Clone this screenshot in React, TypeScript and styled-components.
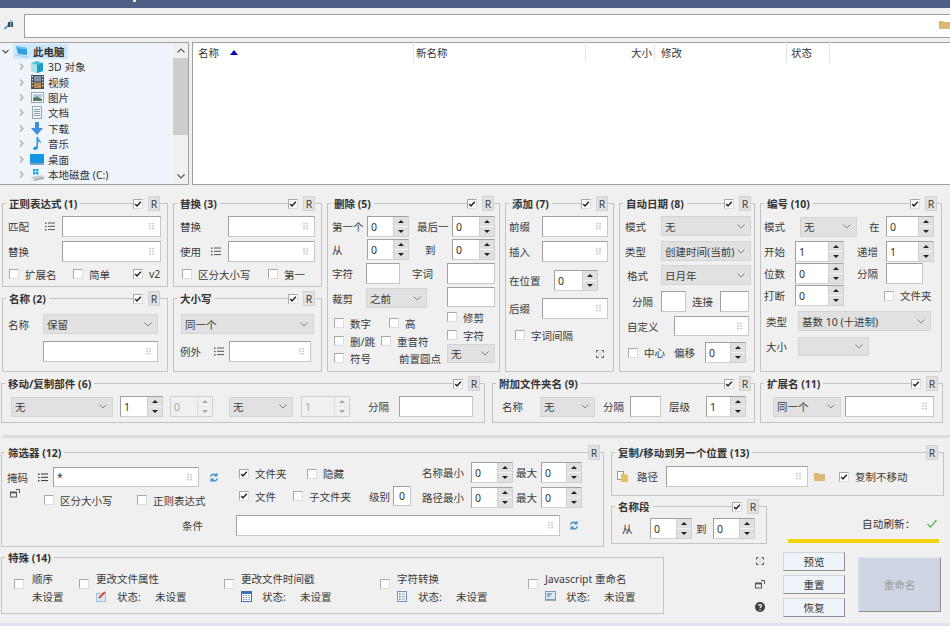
import React from 'react'
import styled, { createGlobalStyle, css } from 'styled-components'

const GlobalStyle = createGlobalStyle`
  html, body { margin: 0; padding: 0; background: #f0f0f0; }
  body { font-family: "Noto Sans", "Noto Sans CJK SC", sans-serif; font-size: 10.5px; color: #333; }
`

type Offset = { $ml?: number; $w?: number }

const offset = css<Offset>`
  margin-left: ${p => p.$ml ?? 0}px;
  ${p => (p.$w !== undefined ? `width: ${p.$w}px;` : '')}
  flex: none;
`

const Page = styled.div`
  width: 950px;
  height: 626px;
  overflow: hidden;
  position: relative;
  display: flex;
  flex-direction: column;
  background: #f0f0f0;
`

const TitleBar = styled.div`
  height: 8px;
  background: #4e5f85;
  flex: none;
  padding-left: 133px;
  box-sizing: border-box;
`

const TitleSpeck = styled.div`
  width: 3px;
  height: 2px;
  background: #e8ecf4;
`

const Toolbar = styled.div`
  height: 34px;
  flex: none;
  display: flex;
  align-items: flex-start;
  padding: 6px 0 0 4px;
  box-sizing: border-box;
`

const PinSlot = styled.span`
  margin-top: 6px;
  display: flex;
`

const PathBox = styled.div`
  margin-left: 10px;
  flex: 1;
  height: 24px;
  background: #fff;
  border: 1px solid #a0a0a0;
  border-right: none;
  box-sizing: border-box;
  display: flex;
  justify-content: flex-end;
  align-items: center;
  overflow: hidden;
  padding-bottom: 4px;
`

const Browser = styled.div`
  height: 143px;
  flex: none;
  display: flex;
  gap: 3px;
`

const Tree = styled.div`
  width: 189px;
  background: #eff4fa;
  border: 1px solid #a0a0a0;
  border-left: none;
  box-sizing: border-box;
  display: flex;
`

const TreeList = styled.div`
  flex: 1;
`

const TreeRow = styled.div<{ $selected?: boolean }>`
  height: ${p => (p.$selected ? 16 : 15.4)}px;
  display: flex;
  align-items: center;
  padding-left: ${p => (p.$selected ? 2 : 18)}px;
`

const TreeIcon = styled.span`
  width: 14px;
  height: 14px;
  margin: 0 4px 0 5px;
  flex: none;
  display: flex;
  align-items: center;
  justify-content: center;
`

const Selected = styled.div`
  display: flex;
  align-items: center;
  background: #cce8ff;
  height: 15px;
  margin-left: 4px;
  padding: 0 3px 0 2px;
  font-weight: 700;
  gap: 4px;
`

const ScrollTrack = styled.div`
  width: 15px;
  background: #f0f0f0;
  display: flex;
  flex-direction: column;
`

const ScrollEnd = styled.div`
  height: 15px;
  flex: none;
  display: flex;
  align-items: center;
  justify-content: center;
`

const ScrollRoom = styled.div`
  flex: 1;
`

const ScrollThumb = styled.div`
  height: 77px;
  background: #cdcdcd;
`

const ListView = styled.div`
  flex: 1;
  background: #fff;
  border: 1px solid #a0a0a0;
  border-right: none;
  box-sizing: border-box;
`

const ListHead = styled.div`
  display: flex;
  height: 19px;
`

const ListCol = styled.div<{ $w: number; $pl?: number; $pr?: number; $right?: boolean }>`
  width: ${p => p.$w}px;
  box-sizing: border-box;
  height: 20px;
  padding: 0 ${p => p.$pr ?? 5}px 0 ${p => p.$pl ?? 5}px;
  display: flex;
  align-items: center;
  border-right: 1px solid #e5e5e5;
  justify-content: ${p => (p.$right ? 'flex-end' : 'flex-start')};
  margin-top: -1px;
`

const SortArrow = styled.span`
  width: 0;
  height: 0;
  margin-left: 11px;
  border-left: 4px solid transparent;
  border-right: 4px solid transparent;
  border-bottom: 5px solid #0000c8;
`

const Panels = styled.div`
  margin: 18px 0 0 2px;
  display: grid;
  grid-template-columns: 166px 149px 173px 109px 136px 182px;
  grid-template-rows: 84px 74px;
  column-gap: 5px;
  row-gap: 11px;
  flex: none;
`

const Group = styled.div<{ $w?: number; $h?: number; $rows?: boolean; $mt?: number; $ml?: number }>`
  border: 1px solid #c4c4c4;
  box-sizing: border-box;
  display: flex;
  flex-direction: column;
  ${p => (p.$w ? `width: ${p.$w}px; flex: none;` : '')}
  ${p => (p.$h ? `height: ${p.$h}px;` : '')}
  ${p => (p.$rows ? 'grid-row: span 2;' : '')}
  ${p => (p.$mt ? `margin-top: ${p.$mt}px;` : '')}
  ${p => (p.$ml ? `margin-left: ${p.$ml}px;` : '')}
`

const Head = styled.div`
  display: flex;
  justify-content: space-between;
  align-items: center;
  height: 15px;
  margin-top: -8px;
  flex: none;
`

const Title = styled.span`
  font-weight: 700;
  background: #f0f0f0;
  padding: 0 3px;
  margin-left: 3px;
  line-height: 14px;
`

const Tools = styled.div<{ $rm: number }>`
  display: flex;
  align-items: center;
  background: #f0f0f0;
  gap: 5px;
  margin-right: ${p => p.$rm}px;
`

const ResetBtn = styled.div`
  width: 12px;
  height: 15px;
  background: #e1e1e1;
  border: 1px solid #d2d2d2;
  box-sizing: border-box;
  display: flex;
  align-items: center;
  justify-content: center;
  font-size: 10.5px;
  color: #444;
`

const Row = styled.div<{ $mt?: number; $h?: number }>`
  display: flex;
  align-items: center;
  flex: none;
  height: ${p => p.$h ?? 21}px;
  margin-top: ${p => p.$mt ?? 0}px;
`

const Label = styled.span<Offset>`
  ${offset}
  white-space: nowrap;
  color: #3a3a3a;
`

const IconSlot = styled.span<Offset>`
  ${offset}
  display: flex;
`

const BoxEl = styled.span<{ $ml?: number }>`
  width: 10px;
  height: 10px;
  flex: none;
  box-sizing: border-box;
  margin-left: ${p => p.$ml ?? 0}px;
  background: #fff;
  border: 1px solid #a8a8a8;
  border-right-color: #dcdcdc;
  border-bottom-color: #dcdcdc;
  display: flex;
  align-items: center;
  justify-content: center;
`

const CheckWrap = styled.span<Offset>`
  ${offset}
  display: flex;
  align-items: center;
  gap: 6px;
  white-space: nowrap;
  color: #3a3a3a;
`

const Box = ({ on, $ml }: { on?: boolean; $ml?: number }) => (
  <BoxEl $ml={$ml}>
    {on && (
      <svg width="8" height="8" viewBox="0 0 8 8">
        <path d="M1.2 4 L3 6 L6.8 1.8" fill="none" stroke="#222" strokeWidth="1.5" />
      </svg>
    )}
  </BoxEl>
)

const Check = ({ label, on, $ml, $w }: { label: string; on?: boolean } & Offset) => (
  <CheckWrap $ml={$ml} $w={$w}>
    <Box on={on} />
    {label}
  </CheckWrap>
)

const FieldEl = styled.div<Offset & { $h?: number; $center?: boolean }>`
  ${offset}
  height: ${p => p.$h ?? 21}px;
  background: #fff;
  border: 1px solid #a0a0a0;
  border-right-color: #c8c8c8;
  border-bottom-color: #c8c8c8;
  box-sizing: border-box;
  display: flex;
  align-items: center;
  justify-content: ${p => (p.$center ? 'center' : 'space-between')};
  padding: 0 3px;
`

const GripGlyph = styled.svg`
  width: 5px;
  height: 7px;
  margin-left: auto;
  margin-right: 3px;
`

const Grip = () => (
  <GripGlyph viewBox="0 0 5 7">
    {[0.5, 3.5].map(x =>
      [0, 2.5, 5].map(y => <rect key={`${x}${y}`} x={x} y={y} width="1" height="1.4" fill="#9a9a9a" />)
    )}
  </GripGlyph>
)

const Field = ({ grip, value, $ml, $w, $h, $center }: { grip?: boolean; value?: string; $h?: number; $center?: boolean } & Offset) => (
  <FieldEl $ml={$ml} $w={$w} $h={$h} $center={$center}>
    {value}
    {grip && <Grip />}
  </FieldEl>
)

const SelectEl = styled.div<Offset & { $h?: number }>`
  ${offset}
  height: ${p => p.$h ?? 20}px;
  background: #e1e1e1;
  border: 1px solid #d4d4d4;
  box-sizing: border-box;
  display: flex;
  align-items: center;
  justify-content: space-between;
  padding: 0 5px 0 3px;
  white-space: nowrap;
  overflow: hidden;
  color: #3a3a3a;
`

const Select = ({ value, $ml, $w, $h }: { value?: string; $h?: number } & Offset) => (
  <SelectEl $ml={$ml} $w={$w} $h={$h}>
    <span>{value}</span>
    <svg width="8" height="5" viewBox="0 0 8 5" style={{ flex: 'none' }}>
      <path d="M0.5 0.5 L4 4 L7.5 0.5" fill="none" stroke="#777" strokeWidth="0.9" />
    </svg>
  </SelectEl>
)

const SpinEl = styled.div<Offset & { $off?: boolean }>`
  ${offset}
  height: 21px;
  display: flex;
  box-sizing: border-box;
  border: 1px solid ${p => (p.$off ? '#d0d0d0' : '#a0a0a0')};
  border-right-color: #d0d0d0;
  border-bottom-color: #d0d0d0;
  background: ${p => (p.$off ? '#f0f0f0' : '#fff')};
  color: ${p => (p.$off ? '#a8a8a8' : '#333')};
`

const SpinVal = styled.span`
  flex: 1;
  padding-left: 3px;
  display: flex;
  align-items: center;
`

const SpinBtns = styled.span<{ $off?: boolean }>`
  width: 14px;
  flex: none;
  display: flex;
  flex-direction: column;
  background: ${p => (p.$off ? '#f0f0f0' : '#e0e0e0')};
  border-left: 1px solid ${p => (p.$off ? '#dcdcdc' : '#d0d0d0')};
`

const SpinBtn = styled.span<{ $down?: boolean; $off?: boolean }>`
  flex: 1;
  display: flex;
  align-items: center;
  justify-content: center;
  ${p => p.$down && `border-top: 1px solid ${p.$off ? '#e6e6e6' : '#f4f4f4'};`}
  &::after {
    content: '';
    border-left: 3px solid transparent;
    border-right: 3px solid transparent;
    ${p => {
      const c = p.$off ? '#a8a8a8' : '#222'
      return p.$down ? `border-top: 3px solid ${c};` : `border-bottom: 3px solid ${c};`
    }}
  }
`

const Spin = ({ value, off, $ml, $w }: { value: string; off?: boolean } & Offset) => (
  <SpinEl $ml={$ml} $w={$w} $off={off}>
    <SpinVal>{value}</SpinVal>
    <SpinBtns $off={off}>
      <SpinBtn $off={off} />
      <SpinBtn $down $off={off} />
    </SpinBtns>
  </SpinEl>
)

const ListGlyph = styled.svg<{ $ml?: number }>`
  width: 10px;
  height: 9px;
  flex: none;
  margin-left: ${p => p.$ml ?? 0}px;
`

const ListIcon = ({ $ml, dark }: { $ml?: number; dark?: boolean }) => (
  <ListGlyph $ml={$ml} viewBox="0 0 10 9">
    {[0.5, 3.8, 7.1].map(y => (
      <g key={y} fill={dark ? '#333' : '#555'}>
        <rect x="0" y={y} width="1.5" height="1.4" />
        <rect x="3" y={y} width="7" height="1" />
      </g>
    ))}
  </ListGlyph>
)

const Split = styled.div<{ $mt?: number; $h?: number }>`
  display: flex;
  ${p => (p.$mt ? `margin-top: ${p.$mt}px;` : '')}
  ${p => (p.$h ? `height: ${p.$h}px;` : '')}
`

const Stack = styled.div<{ $w?: number; $ml?: number }>`
  display: flex;
  flex-direction: column;
  flex: none;
  ${p => (p.$w ? `width: ${p.$w}px;` : '')}
  ${p => (p.$ml ? `margin-left: ${p.$ml}px;` : '')}
`

const ThirdRow = styled.div`
  margin: 11px 0 0 1px;
  display: flex;
  flex: none;
`

const Divider = styled.div`
  height: 3px;
  margin: 12px 0 14px 3px;
  background: #dcdcdc;
  flex: none;
`

const FilterRow = styled.div`
  display: flex;
  margin-left: 1px;
  flex: none;
  height: 95px;
`

const MaskOptions = styled.span`
  margin-left: 8px;
  align-self: flex-start;
  display: flex;
`

const Status = styled.div`
  margin-left: 21px;
  width: 151px;
  display: flex;
  flex-direction: column;
  flex: none;
`

const StatusLine = styled.div`
  display: flex;
  align-items: center;
  height: 14px;
  margin-top: 10px;
  padding-left: 74px;
`

const StatusText = styled.span`
  width: 65px;
  flex: none;
  letter-spacing: 0.2px;
`

const YellowBar = styled.div`
  height: 4px;
  margin-top: 9px;
  background: #f4d20e;
`

const BottomRow = styled.div`
  display: flex;
  margin: 5px 0 0 1px;
  flex: none;
  align-items: flex-start;
`

const SpecialRow = styled.div`
  display: flex;
  margin: 7px 0 0 12px;
`

const SpecialItem = styled.div<{ $w?: number }>`
  display: flex;
  flex: none;
  gap: 7px;
  ${p => (p.$w ? `width: ${p.$w}px;` : '')}
`

const BoxSlot = styled.span`
  margin-top: 7px;
  display: flex;
`

const SpecialLine = styled.div<{ $mt?: number }>`
  height: 12px;
  display: flex;
  align-items: center;
  white-space: nowrap;
  margin-top: ${p => p.$mt ?? 0}px;
  color: #3a3a3a;
`

const StateIcon = styled.span`
  width: 21px;
  flex: none;
  display: flex;
  align-items: center;
`

const StateKey = styled.span`
  width: 38px;
  flex: none;
`

const SideIcons = styled.div`
  margin: 4px 0 0 91px;
  width: 10px;
  flex: none;
  display: flex;
  flex-direction: column;
  gap: 13px;
`

const SideIcon = styled.span`
  width: 10px;
  height: 10px;
  display: flex;
  align-items: center;
  justify-content: center;
`

const Buttons = styled.div`
  margin-left: 18px;
  width: 62px;
  flex: none;
  display: flex;
  flex-direction: column;
  gap: 4.5px;
`

const SmallBtn = styled.div`
  height: 18.5px;
  background: #eff3fa;
  border: 1px solid #d6d6d6;
  border-right-color: #8f8f8f;
  border-bottom-color: #8f8f8f;
  box-sizing: border-box;
  display: flex;
  align-items: center;
  justify-content: center;
  color: #333;
`

const RenameBtn = styled.div`
  margin: 5px 0 0 13px;
  width: 83px;
  height: 55px;
  flex: none;
  background: #cfd6e3;
  border: 1px solid #dfe3ea;
  border-right-color: #8f8f8f;
  border-bottom-color: #8f8f8f;
  box-sizing: border-box;
  display: flex;
  align-items: center;
  justify-content: center;
  color: #9a9a9a;
`

const FootBar = styled.div`
  position: absolute;
  left: 0;
  right: 0;
  bottom: 0;
  height: 3px;
  background: #dfe3ef;
`

const GroupHead = ({ title, rm, on = true }: { title?: string; rm: number; on?: boolean }) => (
  <Head>
    <Title>{title}</Title>
    <Tools $rm={rm}>
      {on && <Box on />}
      <ResetBtn>R</ResetBtn>
    </Tools>
  </Head>
)

// small pictures in the tree and the bottom panels
const PcIcon = () => (
  <svg width="14" height="13" viewBox="0 0 14 13">
    <path d="M1 1 L12 3 L12 10 L3 9 Z" fill="#2f9fe0" />
    <path d="M1 1 L12 3 L12 4.5 L2 3 Z" fill="#66c6f2" />
    <path d="M0 10 L13 12" stroke="#b9c4cc" strokeWidth="1" />
  </svg>
)
const CubeIcon = () => (
  <svg width="14" height="14" viewBox="0 0 14 14">
    <path d="M7 1 L13 3 L13 11 L7 13 L1 11 L1 3 Z" fill="#49c0d9" />
    <path d="M1 3 L7 5 L7 13 L1 11 Z" fill="#a9e3ee" />
    <path d="M7 5 L13 3 L13 11 L7 13 Z" fill="#1c9ec4" />
  </svg>
)
const FilmIcon = () => (
  <svg width="13" height="14" viewBox="0 0 13 14">
    <rect width="13" height="14" fill="#4b4b4b" />
    <rect x="3" y="1" width="7" height="5.5" fill="#7c93b5" />
    <rect x="3" y="7.5" width="7" height="5.5" fill="#b58c58" />
    {[1, 4, 7, 10].map(y => (
      <g key={y} fill="#ddd">
        <rect x="0.7" y={y} width="1.4" height="1.4" />
        <rect x="10.9" y={y} width="1.4" height="1.4" />
      </g>
    ))}
  </svg>
)
const PicIcon = () => (
  <svg width="13" height="11" viewBox="0 0 13 11">
    <rect x="0.5" y="0.5" width="12" height="10" fill="#fff" stroke="#9aa4ad" />
    <rect x="2" y="2" width="9" height="3.5" fill="#a5cdee" />
    <path d="M2 9 L2 6 L6 4.5 L11 7 L11 9 Z" fill="#4e7d6e" />
  </svg>
)
const DocIcon = () => (
  <svg width="10" height="13" viewBox="0 0 10 13">
    <rect x="0.5" y="0.5" width="9" height="12" fill="#f6f7f8" stroke="#9aa4ad" />
    {[3, 5, 7, 9].map(y => (
      <rect key={y} x="2" y={y} width="6" height="1" fill="#7fa0bb" />
    ))}
  </svg>
)
const DownIcon = () => (
  <svg width="12" height="13" viewBox="0 0 12 13">
    <path d="M4 0 H8 V6 H12 L6 13 L0 6 H4 Z" fill="#3f8fe0" />
  </svg>
)
const NoteIcon = () => (
  <svg width="9" height="13" viewBox="0 0 9 13">
    <path d="M3.5 0 H5 C5.2 3 8.5 3.5 8 6.5 C7.2 5 6 4.5 5 4.5 V10.5 C5 12 3.5 13 2 13 C0.5 13 0 12 0.3 11 C0.8 9.7 2.5 9.2 3.5 9.6 Z" fill="#1d9be0" />
  </svg>
)
const DesktopIcon = () => (
  <svg width="14" height="11" viewBox="0 0 14 11">
    <rect width="14" height="9.5" fill="#0f97e6" />
    <rect y="9.5" width="14" height="1.2" fill="#6a7f92" />
  </svg>
)
const DiskIcon = () => (
  <svg width="14" height="13" viewBox="0 0 14 13">
    <path d="M1 9 L11 7 L14 9 L4 12 Z" fill="#c9ced2" />
    <path d="M4 12 L14 9 V10.5 L4 13 Z" fill="#8e979e" />
    <g fill="#19a2de">
      <rect x="3" y="1" width="2.4" height="2.4" />
      <rect x="6" y="1" width="2.4" height="2.4" />
      <rect x="3" y="4" width="2.4" height="2.4" />
      <rect x="6" y="4" width="2.4" height="2.4" />
    </g>
  </svg>
)
const Chevron = ({ down }: { down?: boolean }) => (
  <svg width="7" height="7" viewBox="0 0 7 7" style={{ flex: 'none' }}>
    <path d={down ? 'M0.5 2 L3.5 5 L6.5 2' : 'M2 0.5 L5 3.5 L2 6.5'} fill="none" stroke={down ? '#555' : '#a6a6a6'} strokeWidth="1.1" />
  </svg>
)
const TinyFolder = () => (
  <svg width="11" height="9" viewBox="0 0 11 9" style={{ flex: 'none' }}>
    <path d="M0 1 H4 L5 2 H11 V9 H0 Z" fill="#dcb878" />
  </svg>
)
const PinIcon = () => (
  <svg width="10" height="10" viewBox="0 0 10 10">
    <path d="M4 2 H9 V7 H3.5 Z" fill="#39464f" />
    <path d="M3.5 6 L0.5 9" stroke="#2e86c9" strokeWidth="1.5" />
    <rect x="6" y="0" width="1.5" height="7" fill="#65a5d6" />
  </svg>
)
const Refresh = ({ $ml }: { $ml?: number }) => (
  <svg width="10" height="11" viewBox="0 0 10 11" style={{ marginLeft: $ml, flex: 'none' }}>
    <path d="M1 4.5 C1.5 2 4 0.5 7 2 L8.5 0.5 V4.5 H4.5 L5.8 3.2 C4.5 2.5 3 3 2.5 4.5 Z" fill="#3b93cd" />
    <path d="M9 6.5 C8.5 9 6 10.5 3 9 L1.5 10.5 V6.5 H5.5 L4.2 7.8 C5.5 8.5 7 8 7.5 6.5 Z" fill="#3b93cd" />
  </svg>
)
const ExpandIcon = () => (
  <svg width="8" height="8" viewBox="0 0 8 8" style={{ display: 'block' }}>
    <rect x="1.5" y="1.5" width="5" height="5" fill="#dfe4e8" />
    <path d="M0.5 2.5 V0.5 H2.5 M5.5 0.5 H7.5 V2.5 M7.5 5.5 V7.5 H5.5 M2.5 7.5 H0.5 V5.5" fill="none" stroke="#555" />
  </svg>
)
const WindowIcon = () => (
  <svg width="10" height="9" viewBox="0 0 10 9">
    <rect x="0.5" y="3" width="6" height="5" fill="none" stroke="#555" />
    <rect x="0.5" y="3" width="6" height="1.4" fill="#555" />
    <path d="M6 0.5 H9.5 V4" fill="none" stroke="#555" />
  </svg>
)
const QuestionIcon = () => (
  <svg width="10" height="10" viewBox="0 0 10 10">
    <circle cx="5" cy="5" r="5" fill="#3f3f3f" />
    <path d="M3.4 3.8 C3.4 2.2 6.6 2.2 6.6 3.8 C6.6 5 5 4.8 5 6.1" fill="none" stroke="#fff" strokeWidth="1.2" />
    <rect x="4.4" y="7" width="1.2" height="1.2" fill="#fff" />
  </svg>
)
const AttrIcon = () => (
  <svg width="11" height="11" viewBox="0 0 11 11">
    <rect y="2" width="10" height="9" fill="#9fc0e6" />
    <rect x="1" y="3" width="8" height="7" fill="#d9e7f6" />
    <path d="M3 7 L9 1" stroke="#e04b2e" strokeWidth="2" />
  </svg>
)
const CalIcon = () => (
  <svg width="11" height="11" viewBox="0 0 11 11">
    <rect width="11" height="11" fill="#3f6fb5" />
    <rect x="1" y="3" width="9" height="7" fill="#fff" />
    {[4, 6, 8].map(y => (
      <g key={y} fill="#6d8fc0">
        <rect x="2" y={y} width="1.4" height="1" />
        <rect x="4.7" y={y} width="1.4" height="1" />
        <rect x="7.4" y={y} width="1.4" height="1" />
      </g>
    ))}
  </svg>
)
const TableIcon = () => (
  <svg width="10" height="11" viewBox="0 0 10 11">
    <rect x="0.5" y="0.5" width="9" height="10" fill="#f4f7fb" stroke="#6f93bb" />
    {[2.5, 5, 7.5].map(y => (
      <g key={y}>
        <rect x="2" y={y} width="1.5" height="1.2" fill="#3f79b9" />
        <rect x="4.5" y={y} width="3.5" height="1" fill="#8fa9c6" />
      </g>
    ))}
  </svg>
)
const ScriptIcon = () => (
  <svg width="11" height="10" viewBox="0 0 11 10">
    <rect x="0.5" y="0.5" width="10" height="8" fill="#dce9f6" stroke="#7b9cbd" />
    <path d="M2 3 H7 M2 5 H5" stroke="#3f6fa0" />
    <path d="M0 9.5 H11" stroke="#9aa" />
  </svg>
)
const PasteIcon = () => (
  <svg width="11" height="11" viewBox="0 0 11 11" style={{ flex: 'none' }}>
    <rect x="0.5" y="0.5" width="6" height="8" fill="#fff" stroke="#999" />
    <path d="M4 3 H8 L9 4 H11 V11 H4 Z" fill="#e9c05f" />
  </svg>
)

const treeItems: [React.ReactNode, string][] = [
  [<CubeIcon />, '3D 对象'],
  [<FilmIcon />, '视频'],
  [<PicIcon />, '图片'],
  [<DocIcon />, '文档'],
  [<DownIcon />, '下载'],
  [<NoteIcon />, '音乐'],
  [<DesktopIcon />, '桌面'],
  [<DiskIcon />, '本地磁盘 (C:)'],
]

const specials: { name: string; icon: React.ReactNode; w: number }[] = [
  { name: '更改文件属性', icon: <AttrIcon />, w: 145 },
  { name: '更改文件时间戳', icon: <CalIcon />, w: 156 },
  { name: '字符转换', icon: <TableIcon />, w: 148 },
  { name: 'Javascript 重命名', icon: <ScriptIcon />, w: 136 },
]

export default function App() {
  return (
    <Page>
      <GlobalStyle />
      <TitleBar>
        <TitleSpeck />
      </TitleBar>
      <Toolbar>
        <PinSlot>
          <PinIcon />
        </PinSlot>
        <PathBox>
          <TinyFolder />
        </PathBox>
      </Toolbar>

      <Browser>
        <Tree>
          <TreeList>
            <TreeRow $selected>
              <Chevron down />
              <Selected>
                <PcIcon />
                此电脑
              </Selected>
            </TreeRow>
            {treeItems.map(([icon, name]) => (
              <TreeRow key={name}>
                <Chevron />
                <TreeIcon>{icon}</TreeIcon>
                {name}
              </TreeRow>
            ))}
          </TreeList>
          <ScrollTrack>
            <ScrollEnd>
              <svg width="8" height="5" viewBox="0 0 8 5">
                <path d="M0.5 4.5 L4 1 L7.5 4.5" fill="none" stroke="#555" strokeWidth="1.1" />
              </svg>
            </ScrollEnd>
            <ScrollThumb />
            <ScrollRoom />
            <ScrollEnd>
              <svg width="8" height="5" viewBox="0 0 8 5">
                <path d="M0.5 0.5 L4 4 L7.5 0.5" fill="none" stroke="#555" strokeWidth="1.1" />
              </svg>
            </ScrollEnd>
          </ScrollTrack>
        </Tree>
        <ListView>
          <ListHead>
            <ListCol $w={221}>
              名称
              <SortArrow />
            </ListCol>
            <ListCol $w={172} $pl={2}>新名称</ListCol>
            <ListCol $w={69} $pr={2} $right>
              大小
            </ListCol>
            <ListCol $w={132} $pl={6}>修改</ListCol>
            <ListCol $w={43} $pl={4}>状态</ListCol>
          </ListHead>
        </ListView>
      </Browser>

      <Panels>
        <Group>
          <GroupHead title="正则表达式 (1)" rm={7} />
          <Row $mt={5}>
            <Label $ml={5} $w={37}>匹配</Label>
            <ListIcon />
            <Field $ml={7} $w={99} grip />
          </Row>
          <Row $mt={4}>
            <Label $ml={5} $w={54}>替换</Label>
            <Field $w={99} grip />
          </Row>
          <Row $mt={6} $h={12}>
            <Check $ml={6} $w={64} label="扩展名" />
            <Check $w={60} label="简单" />
            <Check on label="v2" />
          </Row>
        </Group>

        <Group>
          <GroupHead title="替换 (3)" rm={6} />
          <Row $mt={5}>
            <Label $ml={6} $w={48}>替换</Label>
            <Field $w={87} grip />
          </Row>
          <Row $mt={4}>
            <Label $ml={6} $w={31}>使用</Label>
            <ListIcon />
            <Field $ml={7} $w={87} grip />
          </Row>
          <Row $mt={6} $h={12}>
            <Check $ml={8} $w={86} label="区分大小写" />
            <Check label="第一" />
          </Row>
        </Group>

        <Group $rows>
          <GroupHead title="删除 (5)" rm={5} />
          <Row $mt={5}>
            <Label $ml={4} $w={35}>第一个</Label>
            <Spin $w={42} value="0" />
            <Label $ml={8} $w={35}>最后一</Label>
            <Spin $w={43} value="0" />
          </Row>
          <Row $mt={2}>
            <Label $ml={4} $w={35}>从</Label>
            <Spin $w={42} value="0" />
            <Label $ml={16} $w={27}>到</Label>
            <Spin $w={43} value="0" />
          </Row>
          <Row $mt={3}>
            <Label $ml={4} $w={34}>字符</Label>
            <Field $w={34} />
            <Label $ml={12} $w={35}>字词</Label>
            <Field $w={48} />
          </Row>
          <Split $mt={3}>
            <Stack $w={119}>
              <Row $mt={1} $h={20}>
                <Label $ml={4} $w={34}>裁剪</Label>
                <Select $w={61} value="之前" />
              </Row>
              <Row $mt={9} $h={12}>
                <Check $ml={6} $w={55} label="数字" />
                <Check label="高" />
              </Row>
              <Row $mt={6} $h={12}>
                <Check $ml={6} $w={47} label="删/跳" />
                <Check label="重音符" />
              </Row>
              <Row $mt={5} $h={12}>
                <Check $ml={6} $w={65} label="符号" />
                <Label $w={48}>前置圆点</Label>
              </Row>
            </Stack>
            <Stack $w={48}>
              <Field $w={48} $h={20} />
              <Row $mt={4} $h={12}>
                <Check label="修剪" />
              </Row>
              <Row $mt={6} $h={12}>
                <Check label="字符" />
              </Row>
              <Row $mt={3} $h={19}>
                <Select $w={48} $h={19} value="无" />
              </Row>
            </Stack>
          </Split>
        </Group>

        <Group $rows>
          <GroupHead title="添加 (7)" rm={5} />
          <Row $mt={5}>
            <Label $ml={3} $w={33}>前缀</Label>
            <Field $w={66} grip />
          </Row>
          <Row $mt={4}>
            <Label $ml={3} $w={33}>插入</Label>
            <Field $w={66} grip />
          </Row>
          <Row $mt={8}>
            <Label $ml={3} $w={45}>在位置</Label>
            <Spin $w={44} value="0" />
          </Row>
          <Row $mt={7}>
            <Label $ml={3} $w={33}>后缀</Label>
            <Field $w={66} grip />
          </Row>
          <Row $mt={10} $h={12}>
            <Check $ml={9} label="字词间隔" />
          </Row>
          <Row $mt={9} $h={8}>
            <IconSlot $ml={90}>
              <ExpandIcon />
            </IconSlot>
          </Row>
        </Group>

        <Group $rows>
          <GroupHead title="自动日期 (8)" rm={3} />
          <Row $mt={5} $h={20}>
            <Label $ml={5} $w={36}>模式</Label>
            <Select $w={90} value="无" />
          </Row>
          <Row $mt={5} $h={20}>
            <Label $ml={5} $w={36}>类型</Label>
            <Select $w={90} value="创建时间(当前)" />
          </Row>
          <Row $mt={4} $h={20}>
            <Label $ml={7} $w={34}>格式</Label>
            <Select $w={90} value="日月年" />
          </Row>
          <Row $mt={6}>
            <Label $ml={12} $w={29}>分隔</Label>
            <Field $w={25} />
            <Label $ml={6} $w={28}>连接</Label>
            <Field $w={29} />
          </Row>
          <Row $mt={4} $h={20}>
            <Label $ml={7} $w={47}>自定义</Label>
            <Field $w={75} $h={20} grip />
          </Row>
          <Row $mt={6}>
            <Check $ml={8} $w={46} label="中心" />
            <Label $w={31}>偏移</Label>
            <Spin $w={41} value="0" />
          </Row>
        </Group>

        <Group $rows>
          <GroupHead title="编号 (10)" rm={4} />
          <Row $mt={5}>
            <Label $ml={3} $w={36}>模式</Label>
            <Select $w={57} value="无" />
            <Label $ml={12} $w={17}>在</Label>
            <Spin $w={48} value="0" />
          </Row>
          <Row $mt={4}>
            <Label $ml={3} $w={31}>开始</Label>
            <Spin $w={49} value="1" />
            <Label $ml={13} $w={29}>递增</Label>
            <Spin $w={48} value="1" />
          </Row>
          <Row $mt={1}>
            <Label $ml={3} $w={31}>位数</Label>
            <Spin $w={49} value="0" />
            <Label $ml={13} $w={29}>分隔</Label>
            <Field $w={37} />
          </Row>
          <Row $mt={1}>
            <Label $ml={3} $w={31}>打断</Label>
            <Spin $w={49} value="0" />
            <Check $ml={40} label="文件夹" />
          </Row>
          <Row $mt={5} $h={20}>
            <Label $ml={5} $w={32}>类型</Label>
            <Select $w={133} value="基数 10 (十进制)" />
          </Row>
          <Row $mt={6} $h={19}>
            <Label $ml={5} $w={32}>大小</Label>
            <Select $w={71} $h={19} />
          </Row>
        </Group>

        <Group>
          <GroupHead title="名称 (2)" rm={7} />
          <Row $mt={8} $h={20}>
            <Label $ml={5} $w={35}>名称</Label>
            <Select $w={115} value="保留" />
          </Row>
          <Row $mt={7}>
            <Field $ml={40} $w={115} grip />
          </Row>
        </Group>

        <Group>
          <GroupHead title="大小写" rm={6} />
          <Row $mt={8} $h={20}>
            <Select $ml={7} $w={133} value="同一个" />
          </Row>
          <Row $mt={7}>
            <Label $ml={6} $w={34}>例外</Label>
            <ListIcon />
            <Field $ml={5} $w={82} grip />
          </Row>
        </Group>
      </Panels>

      <ThirdRow>
        <Group $w={484} $h={40}>
          <GroupHead title="移动/复制部件 (6)" rm={4} />
          <Row $mt={5}>
            <Select $ml={9} $w={102} value="无" />
            <Spin $ml={7} $w={43} value="1" />
            <Spin $ml={7} $w={43} value="0" off />
            <Select $ml={16} $w={64} value="无" />
            <Spin $ml={8} $w={49} value="1" off />
            <Label $ml={18} $w={31}>分隔</Label>
            <Field $w={74} />
          </Row>
        </Group>
        <Group $w={263} $h={40} $ml={7}>
          <GroupHead title="附加文件夹名 (9)" rm={3} />
          <Row $mt={5}>
            <Label $ml={9} $w={38}>名称</Label>
            <Select $w={55} value="无" />
            <Label $ml={8} $w={27}>分隔</Label>
            <Field $w={31} />
            <Label $ml={8} $w={37}>层级</Label>
            <Spin $w={40} value="1" />
          </Row>
        </Group>
        <Group $w={183} $h={40} $ml={5}>
          <GroupHead title="扩展名 (11)" rm={4} />
          <Row $mt={5}>
            <Select $ml={12} $w={68} value="同一个" />
            <Field $ml={4} $w={89} grip />
          </Row>
        </Group>
      </ThirdRow>

      <Divider />

      <FilterRow>
        <Group $w={603} $h={95}>
          <GroupHead title="筛选器 (12)" rm={3} on={false} />
          <Split $mt={2} $h={50}>
            <Stack $w={234}>
              <Row $mt={5} $h={20}>
                <Label $ml={5} $w={31}>掩码</Label>
                <ListIcon dark />
                <Field $ml={5} $w={146} $h={20} value="*" grip />
                <Refresh $ml={10} />
              </Row>
              <Row $mt={2} $h={22}>
                <MaskOptions>
                  <WindowIcon />
                </MaskOptions>
                <Check $ml={24} $w={93} label="区分大小写" />
                <Check label="正则表达式" />
              </Row>
            </Stack>
            <Stack $w={184}>
              <Row $mt={1}>
                <Check $ml={3} $w={68} on label="文件夹" />
                <Check label="隐藏" />
              </Row>
              <Row $mt={2} $h={20}>
                <Check $ml={3} $w={54} on label="文件" />
                <Check $w={76} label="子文件夹" />
                <Label $w={24}>级别</Label>
                <Field $w={18} $h={20} value="0" $center />
              </Row>
            </Stack>
            <Stack>
              <Row>
                <Label $ml={2} $w={49}>名称最小</Label>
                <Spin $w={42} value="0" />
                <Label $ml={3} $w={25}>最大</Label>
                <Spin $w={41} value="0" />
              </Row>
              <Row $mt={4}>
                <Label $ml={2} $w={49}>路径最小</Label>
                <Spin $w={42} value="0" />
                <Label $ml={3} $w={25}>最大</Label>
                <Spin $w={41} value="0" />
              </Row>
            </Stack>
          </Split>
          <Row $mt={3}>
            <Label $ml={180} $w={54}>条件</Label>
            <Field $w={324} grip />
            <Refresh $ml={9} />
          </Row>
        </Group>

        <Stack $ml={7}>
          <Group $w={333} $h={44}>
            <GroupHead title="复制/移动到另一个位置 (13)" rm={5} on={false} />
            <Row $mt={6}>
              <IconSlot $ml={5} $w={11}>
                <PasteIcon />
              </IconSlot>
              <Label $ml={9} $w={29}>路径</Label>
              <Field $w={142} grip />
              <IconSlot $ml={6} $w={11}>
                <TinyFolder />
              </IconSlot>
              <Check $ml={14} on label="复制不移动" />
            </Row>
          </Group>
          <Split $mt={10}>
            <Group $w={156} $h={38}>
              <GroupHead title="名称段" rm={7} />
              <Row $mt={4}>
                <Label $ml={10} $w={28}>从</Label>
                <Spin $w={42} value="0" />
                <Label $ml={4} $w={17}>到</Label>
                <Spin $w={42} value="0" />
              </Row>
            </Group>
            <Status>
              <StatusLine>
                <StatusText>自动刷新：</StatusText>
                <svg width="10" height="9" viewBox="0 0 10 9">
                  <path d="M0.5 5 L3.5 8 L9.5 1" fill="none" stroke="#5cb85c" strokeWidth="1.4" />
                </svg>
              </StatusLine>
              <YellowBar />
            </Status>
          </Split>
        </Stack>
      </FilterRow>

      <BottomRow>
        <Group $w={663} $h={57} $mt={5}>
          <Head>
            <Title>特殊 (14)</Title>
          </Head>
          <SpecialRow>
            <SpecialItem $w={65}>
              <BoxSlot>
                <Box />
              </BoxSlot>
              <Stack $ml={1}>
                <SpecialLine>顺序</SpecialLine>
                <SpecialLine $mt={6}>未设置</SpecialLine>
              </Stack>
            </SpecialItem>
            {specials.map(s => (
              <SpecialItem key={s.name} $w={s.w}>
                <BoxSlot>
                  <Box />
                </BoxSlot>
                <Stack>
                  <SpecialLine>{s.name}</SpecialLine>
                  <SpecialLine $mt={6}>
                    <StateIcon>{s.icon}</StateIcon>
                    <StateKey>状态:</StateKey>
                    未设置
                  </SpecialLine>
                </Stack>
              </SpecialItem>
            ))}
          </SpecialRow>
        </Group>
        <SideIcons>
          <SideIcon>
            <ExpandIcon />
          </SideIcon>
          <SideIcon>
            <WindowIcon />
          </SideIcon>
          <SideIcon>
            <QuestionIcon />
          </SideIcon>
        </SideIcons>
        <Buttons>
          <SmallBtn>预览</SmallBtn>
          <SmallBtn>重置</SmallBtn>
          <SmallBtn>恢复</SmallBtn>
        </Buttons>
        <RenameBtn>重命名</RenameBtn>
      </BottomRow>

      <FootBar />
    </Page>
  )
}
